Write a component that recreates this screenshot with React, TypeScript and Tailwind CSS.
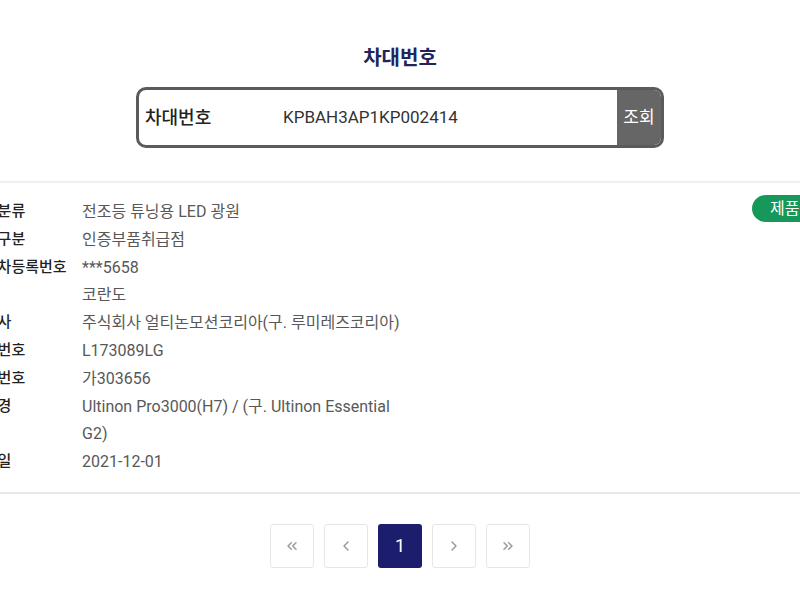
import { ChevronLeft, ChevronRight, ChevronsLeft, ChevronsRight } from "lucide-react";

const rows: { label: string; value: string[] }[] = [
  { label: "품목분류", value: ["전조등 튜닝용 LED 광원"] },
  { label: "부품구분", value: ["인증부품취급점"] },
  { label: "자동차등록번호", value: ["***5658"] },
  { label: "차명", value: ["코란도"] },
  { label: "제작사", value: ["주식회사 얼티논모션코리아(구. 루미레즈코리아)"] },
  { label: "인증번호", value: ["L173089LG"] },
  { label: "승인번호", value: ["가303656"] },
  { label: "반사경", value: ["Ultinon Pro3000(H7) / (구. Ultinon Essential", "G2)"] },
  { label: "등록일", value: ["2021-12-01"] },
];

function PageButton({ children, active }: { children: React.ReactNode; active?: boolean }) {
  return (
    <button
      className={`w-[44px] h-[44px] flex items-center justify-center rounded-[3px] ${
        active ? "bg-[#1d1d6e] text-white" : "border border-[#e6e6e6] bg-white text-[#9a9a9a]"
      }`}
    >
      {children}
    </button>
  );
}

export default function App() {
  return (
    <div
      className="w-[800px] h-[600px] overflow-hidden bg-white"
      style={{ fontFamily: 'Roboto, "Noto Sans CJK KR", sans-serif' }}
    >
      {/* Search header */}
      <div className="pt-[45px] flex flex-col items-center">
        <h2 className="text-[20px] leading-[26px] font-semibold text-[#22245a]">차대번호</h2>
        <div className="mt-[16px] w-[528px] h-[61px] flex items-stretch border-[3px] border-[#5b5b5b] rounded-[10px] overflow-hidden">
          <div className="flex-1 flex items-center pl-[6px]">
            <span className="w-[138px] text-[18px] font-medium text-[#222]">차대번호</span>
            <span className="text-[17px] text-[#333]">KPBAH3AP1KP002414</span>
          </div>
          <button className="w-[44px] bg-[#666] text-white text-[17px]">조회</button>
        </div>
      </div>

      {/* Detail */}
      <div className="mt-[33px] border-t-2 border-[#f0f0f0]" />
      <div className="-mx-[30px] pt-[15px] pb-[16px] flex justify-between">
        <div className="grid grid-cols-[112px_1fr] leading-[27.8px]">
          {rows.map((r) => (
            <div key={r.label} className="contents">
              <div className="text-[15px] font-medium text-[#222] whitespace-nowrap">{r.label}</div>
              <div className="text-[16px] text-[#585858]">
                {r.value.map((v) => (
                  <div key={v}>{v}</div>
                ))}
              </div>
            </div>
          ))}
        </div>
        <div className="self-start -mt-[3px]">
          <span className="inline-flex items-center w-[78px] h-[27px] pl-[18px] rounded-full bg-[#17985b] text-white text-[16px] whitespace-nowrap">
            제품인증
          </span>
        </div>
      </div>
      <div className="border-t-2 border-[#e7e7e7]" />

      {/* Pagination */}
      <div className="mt-[30px] flex justify-center gap-[10px]">
        <PageButton>
          <ChevronsLeft className="w-4 h-4" strokeWidth={2.2} />
        </PageButton>
        <PageButton>
          <ChevronLeft className="w-4 h-4" strokeWidth={2.2} />
        </PageButton>
        <PageButton active>
          <span className="text-[18px]">1</span>
        </PageButton>
        <PageButton>
          <ChevronRight className="w-4 h-4" strokeWidth={2.2} />
        </PageButton>
        <PageButton>
          <ChevronsRight className="w-4 h-4" strokeWidth={2.2} />
        </PageButton>
      </div>
    </div>
  );
}
